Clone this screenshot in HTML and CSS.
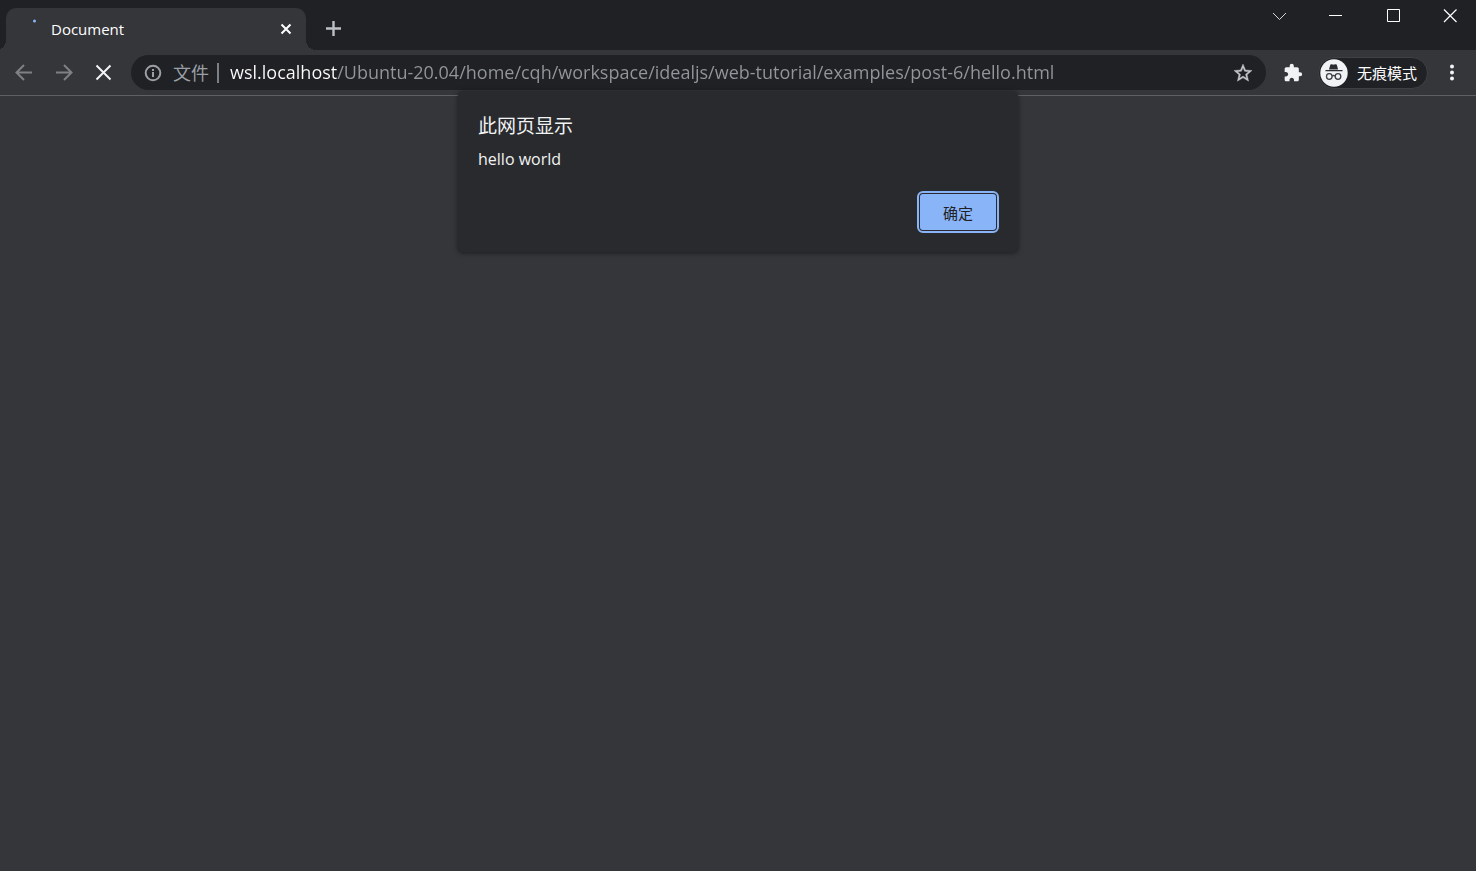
FILE: index.html
```
<!DOCTYPE html>
<html lang="zh-CN">
<head>
    <meta charset="UTF-8">
    <meta name="viewport" content="width=device-width, initial-scale=1.0">
    <title>Document</title>
    <link rel="stylesheet" href="styles.css">
</head>
<body>

<div class="tab-strip">
    <div class="tab">
        <svg class="spinner" width="16" height="20" viewBox="0 0 16 20"><circle cx="6.500" cy="2" r="1.500" fill="#8ab4f8"/></svg>
        <span class="tab-title">Document</span>
        <button class="tab-close" aria-label="Close tab">
            <svg width="12" height="12" viewBox="0 0 12 12"><path d="M1.500 1.500l9 9M10.500 1.500l-9 9" stroke="#fff" stroke-width="2"/></svg>
        </button>
    </div>
    <button class="new-tab" aria-label="New tab">
        <svg width="16" height="16" viewBox="0 0 16 16"><path d="M8.500 0v15M1 7.500h15" stroke="#bdc1c6" stroke-width="2.400"/></svg>
    </button>
    <div class="window-controls">
        <button aria-label="Search tabs"><svg width="14" height="14" viewBox="0 0 14 14"><path d="M1 4L7.500 10.500 14 4" fill="none" stroke="#d4d5d7"/></svg></button>
        <button aria-label="Minimize"><svg width="14" height="14" viewBox="0 0 14 14"><path d="M0 6.500h13" stroke="#fff"/></svg></button>
        <button aria-label="Maximize"><svg width="14" height="14" viewBox="0 0 14 14"><path d="M1.500.5h12v12h-12z" fill="none" stroke="#fff"/></svg></button>
        <button aria-label="Close"><svg width="14" height="14" viewBox="0 0 14 14"><path d="M1 .5l12.500 12.500M13.500.5L1 13" stroke="#fff" stroke-width="1.200"/></svg></button>
    </div>
</div>

<div class="toolbar">
    <button class="nav-button" aria-label="Back">
        <svg width="18" height="18" viewBox="0 0 18 18"><path d="M17 8.500H2M9 1L1.500 8.500 9 16" fill="none" stroke="#7e8084" stroke-width="2"/></svg>
    </button>
    <button class="nav-button" aria-label="Forward">
        <svg width="18" height="18" viewBox="0 0 18 18"><path d="M1 8.500h15M9 1L16.500 8.500 9 16" fill="none" stroke="#7e8084" stroke-width="2"/></svg>
    </button>
    <button class="nav-button" aria-label="Stop">
        <svg width="18" height="18" viewBox="0 0 18 18"><path d="M1.500 1.500l14 14M15.500 1.500l-14 14" stroke="#f1f3f4" stroke-width="2"/></svg>
    </button>

    <div class="omnibox">
        <svg width="18" height="18" viewBox="0 0 18 18"><circle cx="9" cy="9" r="7.300" fill="none" stroke="#9aa0a6" stroke-width="2"/><path d="M9 8v5M9 5v2" stroke="#9aa0a6" stroke-width="2"/></svg>
        <label class="scheme" for="url">文件</label>
        <input class="url" id="url" type="text" value="wsl.localhost/Ubuntu-20.04/home/cqh/workspace/idealjs/web-tutorial/examples/post-6/hello.html">
        <button aria-label="Bookmark this page">
            <svg width="20" height="20" viewBox="1 1 22 22"><path fill="#c4c7ca" stroke="#c4c7ca" stroke-width=".4" d="M22 9.240l-7.190-.62L12 2 9.190 8.630 2 9.240l5.460 4.730L5.820 21 12 17.270 18.180 21l-1.630-7.030L22 9.240zM12 15.400l-3.760 2.270 1-4.280-3.320-2.880 4.380-.38L12 6.100l1.710 4.040 4.380.38-3.320 2.880 1 4.280L12 15.400z"/></svg>
        </button>
    </div>

    <button class="extensions" aria-label="Extensions">
        <svg width="20" height="20" viewBox="0 0 24 24"><path fill="#f1f3f4" d="M20.500 11H19V7c0-1.100-.9-2-2-2h-4V3.500a2.500 2.500 0 0 0-5 0V5H4c-1.100 0-1.990.9-1.990 2v3.800H3.500c1.490 0 2.700 1.210 2.700 2.700s-1.210 2.700-2.700 2.700H2V20c0 1.100.9 2 2 2h3.800v-1.500c0-1.490 1.210-2.700 2.700-2.700s2.700 1.210 2.700 2.700V22H17c1.100 0 2-.9 2-2v-4h1.500a2.500 2.500 0 0 0 0-5z"/></svg>
    </button>
    <button class="profile">
        <svg width="28" height="28" viewBox="0 0 28 28">
            <circle cx="14" cy="14" r="13.700" fill="#f1f3f4"/>
            <path fill="#2b2c2f" d="M9 10.500l1.300-4.700c.2-.6.700-.8 1.200-.6l1.200.4c.6.200 1.100.200 1.700 0l1.200-.4c.5-.2 1 0 1.200.6l1.300 4.700zM5.500 11h17v1.300h-17z"/>
            <g fill="none" stroke="#3c4043" stroke-width="1.300"><circle cx="9.300" cy="17.500" r="2.800"/><circle cx="18" cy="17.500" r="2.800"/><path d="M12 17q1.700-1 3.200 0"/></g>
        </svg>
        <span>无痕模式</span>
    </button>
    <button class="menu" aria-label="Menu">
        <svg width="6" height="18" viewBox="0 0 6 18"><g fill="#f1f3f4"><circle cx="3" cy="2.500" r="2"/><circle cx="3" cy="8.500" r="2"/><circle cx="3" cy="14.500" r="2"/></g></svg>
    </button>

    <div class="dialog" role="alertdialog" aria-labelledby="dialog-title">
        <h1 class="dialog-title" id="dialog-title">此网页显示</h1>
        <p class="dialog-message">hello world</p>
        <button class="dialog-ok">确定</button>
    </div>
</div>

</body>
</html>
```
FILE: styles.css
```
body {
    margin: 0;
    min-height: 100vh;
    background: #35363a;
    color: #fff;
    font-family: "Open Sans", "Noto Sans CJK SC", sans-serif;
}

button {
    display: flex;
    align-items: center;
    justify-content: center;
    padding: 0;
    border: 0;
    background: none;
    color: inherit;
    font-family: inherit;
    cursor: pointer;
}

svg {
    display: block;
    flex: none;
}

.tab-strip {
    display: flex;
    height: 50px;
    padding-left: 6px;
    background: #202124;
}

.tab {
    position: relative;
    display: flex;
    align-items: center;
    box-sizing: border-box;
    width: 300px;
    margin-top: 8px;
    padding: 0 14px 0 22px;
    border-radius: 10px 10px 0 0;
    background: #35363a;
}

/* curved feet of the active tab */
.tab::before,
.tab::after {
    content: "";
    position: absolute;
    bottom: 0;
    width: 10px;
    height: 10px;
}

.tab::before {
    right: 100%;
    background: radial-gradient(circle at 0 0, transparent 10px, #35363a 10px);
}

.tab::after {
    left: 100%;
    background: radial-gradient(circle at 100% 0, transparent 10px, #35363a 10px);
}

.tab-title {
    flex: 1;
    margin-left: 7px;
    font-size: 15px;
    font-weight: 500;
}

.new-tab {
    width: 54px;
    padding-top: 7px;
}

.window-controls {
    display: flex;
    align-items: flex-start;
    gap: 43px;
    margin-left: auto;
    padding: 9px 19px 0 0;
}

.toolbar {
    position: relative;
    display: flex;
    align-items: center;
    height: 45px;
    padding-left: 4px;
    border-bottom: 1px solid #5f6063;
}

.nav-button {
    width: 40px;
    height: 40px;
}

.omnibox {
    flex: 1;
    display: flex;
    align-items: center;
    min-width: 0;
    height: 35px;
    margin-left: 7px;
    padding: 0 13px;
    border-radius: 18px;
    background: #202124;
}

.scheme {
    margin: 0 11px 0 11px;
    padding-right: 8px;
    border-right: 2px solid #7c8084;
    color: #9aa0a6;
    font-size: 18px;
    line-height: 20px;
}

/* host is white, the path after it is grey */
.url {
    flex: 1;
    min-width: 0;
    height: 26px;
    margin-bottom: 2px;
    padding: 0;
    border: 0;
    outline: 0;
    background: linear-gradient(to right, #fff 107px, #93979b 107px);
    -webkit-background-clip: text;
    background-clip: text;
    color: transparent;
    font-family: inherit;
    font-size: 18px;
}

.extensions {
    width: 52px;
    padding-left: 2px;
}

.profile {
    gap: 9px;
    height: 32px;
    padding: 0 10px 0 1px;
    border: 1px solid #3f4044;
    border-radius: 17px;
    background: #202124;
    font-size: 15px;
}

.menu {
    width: 48px;
    height: 32px;
}

.dialog {
    position: absolute;
    top: 41px;
    left: 50%;
    transform: translateX(-50%);
    box-sizing: border-box;
    width: 560px;
    max-width: 100%;
    padding: 21px 22px 22px 20px;
    border-radius: 5px;
    background: #292a2d;
    box-shadow: 0 1px 5px rgba(0, 0, 0, 0.5);
    color: #f1f3f4;
}

.dialog-title {
    margin: 0;
    font-size: 19px;
    font-weight: 400;
    line-height: 28px;
}

.dialog-message {
    margin: 8px 0 24px;
    font-size: 16px;
    font-weight: 500;
    line-height: 22px;
}

.dialog-ok {
    width: 76px;
    height: 36px;
    margin-left: auto;
    border-radius: 3px;
    outline: 2px solid #8ab4f8;
    outline-offset: 1px;
    background: #8ab4f8;
    color: #202124;
    font-size: 15px;
}
```
